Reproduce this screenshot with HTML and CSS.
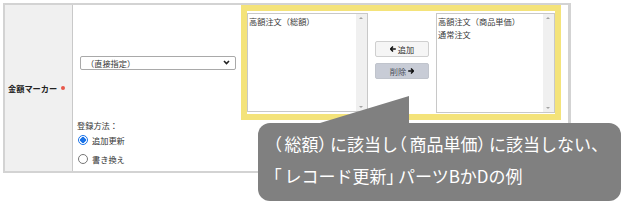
FILE: index.html
```html
<!DOCTYPE html>
<html lang="ja">
<head>
<meta charset="utf-8">
<link rel="stylesheet" href="styles.css">
</head>
<body>
<div class="page">
  <div class="table">
    <div class="label-cell"><span class="label">金額マーカー</span><span class="req"></span></div>
    <div class="content-cell">
      <div class="top-row">
        <div class="select"><span class="select-text">（直接指定）</span>
          <svg class="chev" width="7" height="5" viewBox="0 0 7 5"><path d="M1 1 L3.5 3.5 L6 1" fill="none" stroke="#222" stroke-width="1.6"/></svg>
        </div>
        <div class="highlight">
          <div class="listbox lb-left">
            <div class="items"><div>高額注文（総額）</div></div>
            <div class="scroll"><span class="up"></span><span class="down"></span></div>
          </div>
          <div class="btns">
            <div class="btn btn-add"><svg width="6" height="6" viewBox="0 0 6 6"><path d="M3 0.5 L0.5 3 L3 5.5 M0.8 3 H5.8" fill="none" stroke="#111" stroke-width="1.5"/></svg>追加</div>
            <div class="btn btn-del">削除<svg width="6" height="6" viewBox="0 0 6 6"><path d="M3 0.5 L5.5 3 L3 5.5 M5.2 3 H0.2" fill="none" stroke="#111" stroke-width="1.5"/></svg></div>
          </div>
          <div class="listbox lb-right">
            <div class="items"><div>高額注文（商品単価）</div><div>通常注文</div></div>
            <div class="scroll"><span class="up"></span><span class="down"></span></div>
          </div>
        </div>
      </div>
      <div class="method">
        <div class="method-title">登録方法：</div>
        <div class="radio-row"><span class="radio checked"></span>追加更新</div>
        <div class="radio-row"><span class="radio"></span>書き換え</div>
      </div>
    </div>
  </div>
  <svg class="pointer" width="95" height="30" viewBox="0 0 95 30"><polygon points="0,28 89,1 89,30 0,30" fill="#808080"/></svg>
  <div class="callout">
    <p><span class="pn">（</span>総額<span class="pn">）</span>に該当し<span class="pn">（</span>商品単価<span class="pn">）</span>に該当しない、</p>
    <p><span class="pn">「</span>レコード更新<span class="pn">」</span>パーツBかDの例</p>
  </div>
</div>
</body>
</html>
```
FILE: styles.css
```css
* { box-sizing: border-box; }
html, body { margin: 0; padding: 0; background: #fff; }
body { width: 627px; height: 203px; overflow: hidden; font-family: "Noto Sans CJK JP", "Noto Sans", sans-serif; color: #333; }
.page { position: relative; width: 627px; height: 203px; padding: 3px 0 0 3px; }
.table { display: flex; width: 568px; height: 170px; border: 2px solid #d3d3d3; border-right-width: 3px; }
.label-cell { width: 68px; background: #f0f0f0; border-right: 1px solid #c9c9c9; display: flex; align-items: center; padding-left: 3px; }
.label { font-size: 8.2px; font-weight: bold; color: #222; letter-spacing: 0; }
.req { display: inline-block; width: 4px; height: 4px; border-radius: 50%; background: #e8574a; margin-left: 4px; }
.content-cell { flex: 1; display: flex; flex-direction: column; }
.top-row { display: flex; align-items: center; padding-left: 7px; height: 115px; }
.select { width: 156px; height: 14px; border: 1px solid #a9a9a9; border-radius: 2px; display: flex; align-items: center; justify-content: space-between; padding: 0 5px 0 5px; background: #fff; }
.select-text { font-size: 8.2px; color: #333; }
.highlight { margin-left: 5px; width: 320px; height: 115px; border: 6px solid #f4e37a; background: #fff; display: flex; align-items: flex-start; }
.listbox { position: relative; height: 99px; margin-top: 2px; border: 1px solid #c8c8c8; display: flex; }
.lb-left { width: 121px; }
.lb-right { width: 119px; height: 100px; }
.items { flex: 1; padding: 1px 0 0 1px; font-size: 8.2px; line-height: 12.5px; color: #3a3a3a; }
.scroll { width: 11px; background: #f0f0f0; position: relative; }
.up, .down { position: absolute; left: 3px; width: 0; height: 0; border-left: 2.5px solid transparent; border-right: 2.5px solid transparent; }
.up { top: 3px; border-bottom: 2.5px solid #a3a3a3; }
.down { bottom: 3px; border-top: 2.5px solid #a3a3a3; }
.btns { width: 68px; display: flex; flex-direction: column; align-items: center; gap: 6px; margin-top: 30px; }
.btn { width: 54px; height: 16px; border: 1px solid #cfcfcf; border-radius: 2px; display: flex; align-items: center; justify-content: center; gap: 2px; font-size: 8.2px; color: #333; background: #f5f5f5; }
.btn-del { background: #c8ccd6; border-color: #c0c4cc; color: #4a4f5a; }
.method { padding-left: 4px; }
.method-title { font-size: 8.2px; color: #333; height: 10px; line-height: 10px; }
.radio-row { display: flex; align-items: center; font-size: 8.2px; color: #333; height: 19px; gap: 4px; padding-left: 1px; }
.radio { width: 10px; height: 10px; border-radius: 50%; border: 1px solid #767676; background: #fff; }
.radio.checked { border: 1.5px solid #1a73e8; background: radial-gradient(circle, #1a73e8 0 2.6px, #fff 3px); }
.pointer { position: absolute; left: 320px; top: 95px; }
.callout { position: absolute; left: 258px; top: 123px; width: 363px; height: 78px; background: #808080; border-radius: 12px; padding: 5px 0 0 15px; color: #fff; font-size: 17px; line-height: 32px; }
.callout p { margin: 0; white-space: nowrap; }
.pn { font-feature-settings: "palt"; letter-spacing: 3px; }
```
